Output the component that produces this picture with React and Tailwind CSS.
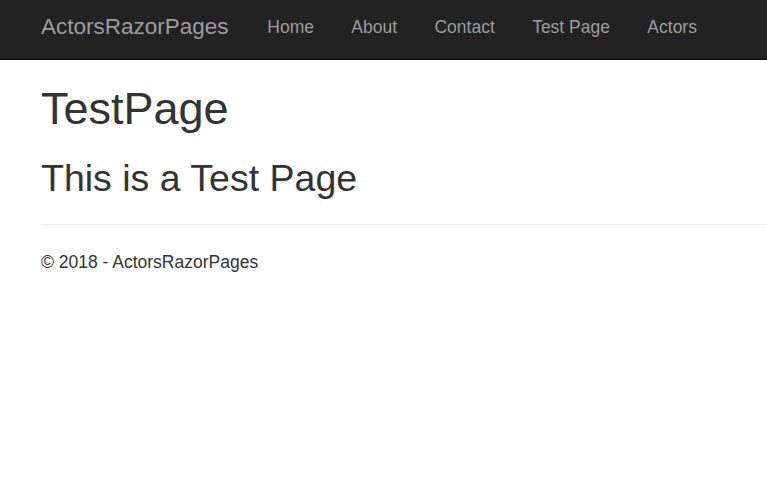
export default function App() {
  const links = ['Home', 'About', 'Contact', 'Test Page', 'Actors'];

  return (
    <div className="min-h-screen bg-white text-[#333]" style={{ fontFamily: '"Liberation Sans", Arial, sans-serif' }}>
      <header className="h-[60px] bg-[#222] border-b border-[#080808] flex items-start pl-[41px]">
        <a href="#" className="pt-[14px] text-[22.5px] leading-[25px] text-[#9d9d9d]">ActorsRazorPages</a>
        <nav className="flex ml-[20px]">
          {links.map((l) => (
            <a key={l} href="#" className="px-[18.7px] pt-[15px] text-[17.5px] leading-[25px] text-[#9d9d9d]">
              {l}
            </a>
          ))}
        </nav>
      </header>

      <div className="pl-[41px]">
        <h1 className="mt-[24px] text-[45px] leading-[1.1]">TestPage</h1>
        <h2 className="mt-[24px] text-[37.5px] leading-[1.1]">This is a Test Page</h2>
        <hr className="mt-[25px] border-0 border-t border-[#eee]" />
        <footer>
          <p className="mt-[25px] text-[17.5px] leading-[25px]">© 2018 - ActorsRazorPages</p>
        </footer>
      </div>
    </div>
  );
}
